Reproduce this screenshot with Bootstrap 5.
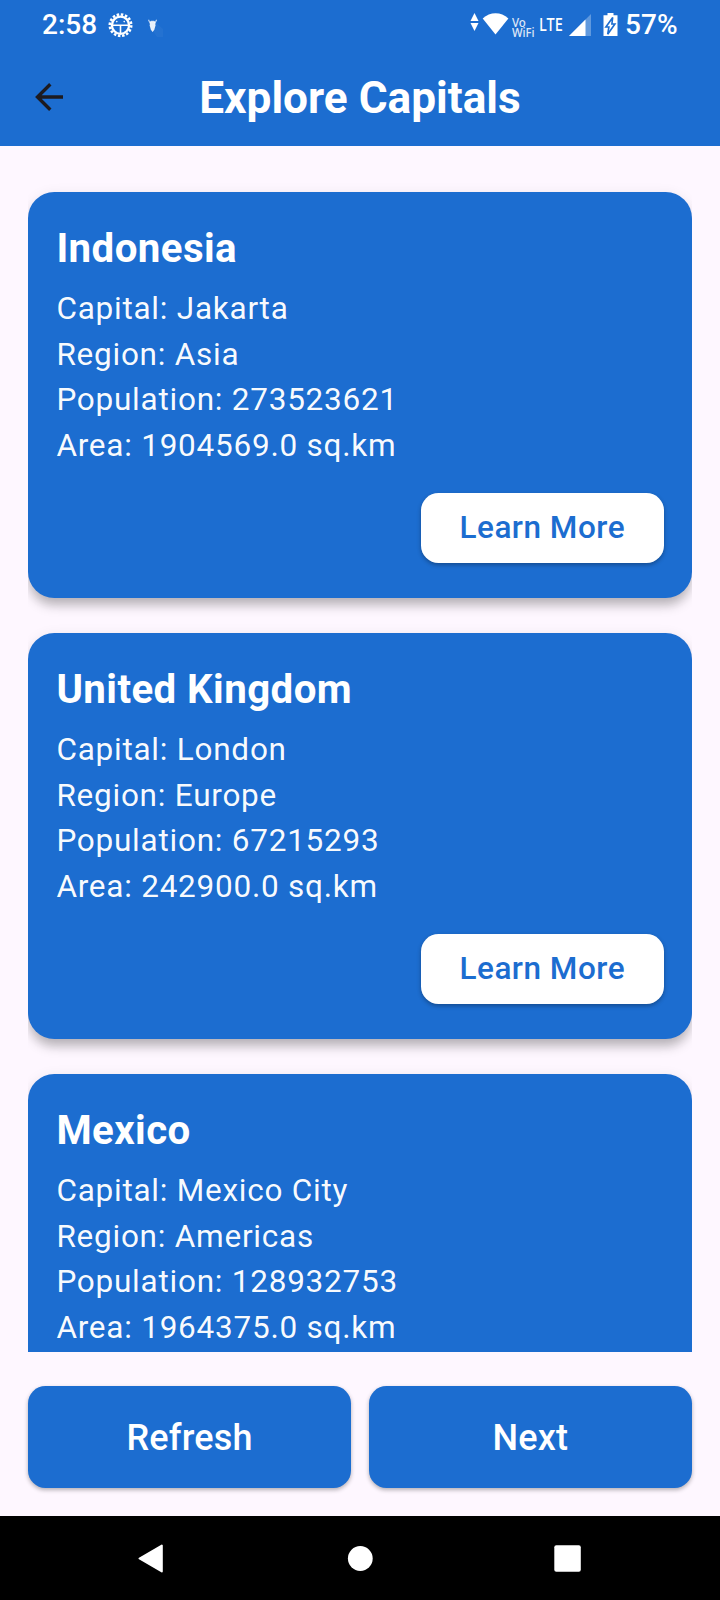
<!DOCTYPE html>
<html lang="en">
<head>
<meta charset="utf-8">
<meta name="viewport" content="width=device-width, initial-scale=1">
<title>Explore Capitals</title>
<link href="https://cdn.jsdelivr.net/npm/bootstrap@5.3.0/dist/css/bootstrap.min.css" rel="stylesheet">
<style>
:root{--blue:#1c6dd0;--surface:#fef7ff}
body{font-family:Roboto,"Liberation Sans",sans-serif;background:var(--surface);height:1600px;overflow:hidden}
svg{display:block;flex:none}
.topbar{background:var(--blue);height:146px;color:#fff}
.status{height:48px;padding:2px 42.5px 0 42px;font-size:28px;font-weight:500;line-height:46px}
.notices{margin-left:9px}
.toolbar{height:98px;display:grid;grid-template-columns:98px 1fr 98px}
.toolbar h1{font-size:44.2px;font-weight:700;line-height:1;white-space:nowrap;padding-top:2px}
.capitals{height:1206px;padding:45.5px 0 0;margin:0 28px;overflow:hidden}
.country{background:var(--blue);border:0;border-radius:26.25px;height:406px;margin-bottom:35px;padding:29px 28px 28px 28.4px;color:#fff;box-shadow:0 9px 12px -2px rgba(0,0,0,.26),0 2px 14px rgba(0,0,0,.07);flex:none}
.country h2{font-size:40.25px;font-weight:700;line-height:56px;letter-spacing:.42px;margin:0 0 9.3px}
.country p{font-size:31.5px;line-height:45.7px;letter-spacing:.76px;color:rgba(255,255,255,.97)}
.learn,.learn:hover{align-self:flex-end;margin-top:24.3px;width:243.5px;height:70px;border:0;border-radius:17.5px;background:#fff;color:var(--blue);font-size:31.5px;font-weight:500;letter-spacing:.5px;line-height:70px;padding:0;box-shadow:0 2px 4px rgba(0,0,0,.3)}
.actions{height:164px;padding:34.4px 28px 0;gap:17.5px}
.action,.action:hover{flex:1;height:101.5px;border:0;border-radius:17.5px;background:var(--blue);color:#fff;font-size:36px;font-weight:500;letter-spacing:.2px;padding-top:8px;box-shadow:0 2px 4px rgba(0,0,0,.3)}
.sysnav{height:84px;background:#000}
</style>
</head>
<body>
<div class="d-flex flex-column">
<header class="topbar">
  <div class="status d-flex align-items-center">
    <span>2:58</span>
    <svg class="notices" width="60" height="46" viewBox="106 1 60 46">
      <circle cx="120.5" cy="24.2" r="10.7" fill="none" stroke="#fff" stroke-width="2.6" stroke-dasharray="2.5 1.702"/>
      <circle cx="120.5" cy="24.2" r="8.6" fill="none" stroke="#fff" stroke-width="2.3"/>
      <path d="M112 24.3h17M120.5 24v9" stroke="#fff" stroke-width="1.6"/>
      <circle cx="116.8" cy="20.6" r=".8" fill="#fff"/><circle cx="124.2" cy="20.6" r=".8" fill="#fff"/>
      <path d="M155 21l8 7v8h-6l-4-6z" fill="#fff" opacity=".04"/>
      <path d="M148.5 18.800l1.400 3 1.400-1.500h2.500l1.400 1.500 1.400-3" fill="none" stroke="#fff" stroke-width="1.200" opacity=".7"/>
      <path d="M150.200 20.500h4.800l.5 4-1.200 4.200-1.700 2.400-1.700-2.400-1.200-4.200z" fill="#fff" opacity=".9"/>
    </svg>
    <svg class="ms-auto" width="156" height="46" viewBox="469.500 1 156 46" font-family="'Noto Sans',sans-serif" fill="#fff">
      <path d="M475 12l4 8h-8zM471 22h8l-4 8z"/>
      <path d="M483.200 17.500c7.300-7 18.400-7 25.700 0L496 33.600z"/>
      <g opacity=".85" font-size="12.500"><text transform="translate(512.500 26) scale(.92 1)">Vo</text><text transform="translate(512.500 35.800) scale(.9 1)">WiFi</text></g>
      <text transform="translate(539.500 30) scale(.83 1)" font-size="17.500">LTE</text>
      <path d="M591.500 13v22h-22z" opacity=".3"/><path d="M586 18.500V35h-16.500z"/>
      <path d="M608 12h6v2.300h4V35h-14V14.300h4z"/>
      <path d="M613.200 16.500l-6.800 9.500h3l-1.200 7.200 7.200-10.200h-3z" fill="none" stroke="#1c6dd0" stroke-width="1.600"/>
    </svg>
    <span>57%</span>
  </div>
  <div class="toolbar align-items-center">
    <svg width="98" height="98" viewBox="0 48 98 98"><path d="M50.300 84.300L37.500 97l12.800 12.800M37.500 97H63" fill="none" stroke="#1d1b20" stroke-width="3.400"/></svg>
    <h1 class="text-center m-0">Explore Capitals</h1>
  </div>
</header>
<main class="capitals d-flex flex-column">
  <article class="card country">
    <h2>Indonesia</h2>
    <p class="m-0">Capital: Jakarta</p><p class="m-0">Region: Asia</p><p class="m-0">Population: 273523621</p><p class="m-0">Area: 1904569.0 sq.km</p>
    <button class="btn learn">Learn More</button>
  </article>
  <article class="card country">
    <h2>United Kingdom</h2>
    <p class="m-0">Capital: London</p><p class="m-0">Region: Europe</p><p class="m-0">Population: 67215293</p><p class="m-0">Area: 242900.0 sq.km</p>
    <button class="btn learn">Learn More</button>
  </article>
  <article class="card country">
    <h2>Mexico</h2>
    <p class="m-0">Capital: Mexico City</p><p class="m-0">Region: Americas</p><p class="m-0">Population: 128932753</p><p class="m-0">Area: 1964375.0 sq.km</p>
    <button class="btn learn">Learn More</button>
  </article>
</main>
<div class="actions d-flex align-items-start">
  <button class="btn action">Refresh</button>
  <button class="btn action">Next</button>
</div>
<nav class="sysnav">
  <svg width="720" height="84" viewBox="0 1516 720 84" fill="#fff">
    <path d="M139.500 1558.500L161.800 1545.500V1571.500z" stroke="#fff" stroke-width="2" stroke-linejoin="round"/>
    <circle cx="360.300" cy="1558.500" r="12.400"/><rect x="554.300" y="1545.300" width="26.500" height="26.500" rx="2"/>
  </svg>
</nav>
</div>
<script src="https://cdn.jsdelivr.net/npm/bootstrap@5.3.0/dist/js/bootstrap.bundle.min.js"></script>
</body>
</html>
